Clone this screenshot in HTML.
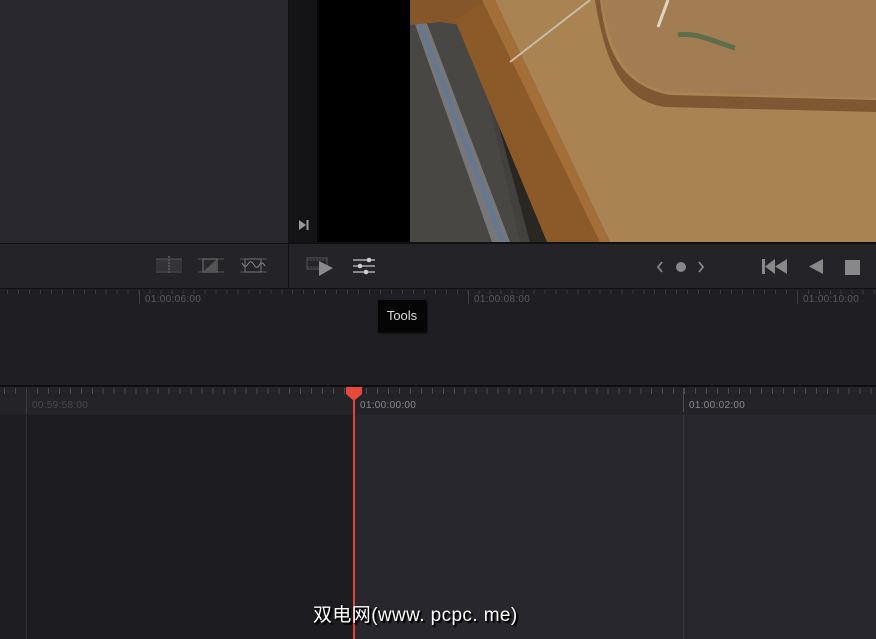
<!DOCTYPE html>
<html><head><meta charset="utf-8"><style>
*{margin:0;padding:0;box-sizing:border-box}
body{width:876px;height:639px;overflow:hidden;background:#1e1e22;position:relative;font-family:"Liberation Sans",sans-serif}
.a{position:absolute}
.tc{font-size:10px;color:#5a5a60;letter-spacing:0.3px}
</style></head><body>
<div class="a" style="left:0;top:0;width:288px;height:243px;background:#28282e"></div>
<div class="a" style="left:288px;top:0;width:1px;height:288px;background:#111"></div>
<div class="a" style="left:289px;top:0;width:28px;height:242px;background:#141416"></div>
<div class="a" style="left:317px;top:0;width:93px;height:242px;background:#000"></div>
<svg class="a" style="left:298px;top:219px" width="12" height="12"><path d="M1 1 L8 6 L1 11Z" fill="#999"/><rect x="8.5" y="1" width="2" height="10" fill="#999"/></svg>
<svg class="a" style="left:410px;top:0" width="466" height="242" viewBox="0 0 466 242">
<rect width="466" height="242" fill="#42413d"/>
<polygon points="0,0 0,242 110,242 60,20" fill="#484743"/>
<polygon points="0,10 10,5 100,242 82,242" fill="#77777a"/>
<polygon points="4,15 8,12 96,242 90,242" fill="#66788f"/>
<polygon points="60,20 80,10 170,242 120,242" fill="#2a2723"/>
<polygon points="0,0 80,0 80,22 50,25 30,22 0,25" fill="#85562a"/>
<polygon points="45,20 77,0 197,242 137,242" fill="#8c5a28"/>
<polygon points="72,0 85,0 200,242 190,242" fill="#a36e38"/>
<polygon points="85,0 466,0 466,242 200,242" fill="#a98452"/>
<path d="M190 0 C 195 40, 205 85, 260 95 L466 100 L466 112 L255 107 C 210 100, 195 60, 185 0Z" fill="#7d5832"/>
<path d="M192 0 L466 0 L466 98 L262 92 C 215 85, 200 50, 192 0Z" fill="#a27d53"/>
<path d="M100 62 L180 0" stroke="#c8bca8" stroke-width="2"/>
<path d="M248 27 L258 0" stroke="#e0d6c0" stroke-width="3"/>
<path d="M268 35 C 285 32, 300 40, 325 48" stroke="#5d6e4a" stroke-width="5" fill="none"/>
</svg>
<div class="a" style="left:289px;top:242px;width:587px;height:2px;background:#111"></div>
<div class="a" style="left:0;top:243px;width:288px;height:1px;background:#111"></div>
<div class="a" style="left:0;top:244px;width:288px;height:45px;background:#232328"></div>
<div class="a" style="left:289px;top:244px;width:587px;height:45px;background:#232328"></div>
<svg class="a" style="left:155px;top:256px" width="115" height="22">
<rect x="1" y="3" width="26" height="12" fill="#333338"/><line x1="14" y1="0" x2="14" y2="18" stroke="#777" stroke-dasharray="2,1"/><line x1="1" y1="3" x2="27" y2="3" stroke="#555"/><line x1="1" y1="16" x2="27" y2="16" stroke="#555"/>
<line x1="43" y1="3" x2="69" y2="3" stroke="#555"/><line x1="43" y1="16" x2="69" y2="16" stroke="#555"/><rect x="48" y="3" width="14" height="13" fill="#2a2a2e" stroke="#777"/><path d="M49 15 L61 4 L61 15Z" fill="#555"/>
<line x1="85" y1="3" x2="112" y2="3" stroke="#555"/><line x1="85" y1="16" x2="112" y2="16" stroke="#555"/><rect x="90" y="3" width="16" height="13" fill="none" stroke="#777"/><path d="M87 7 Q90 13 93 8 Q96 3 99 9 Q102 14 105 8 Q107 5 110 10" stroke="#888" fill="none"/>
</svg>
<svg class="a" style="left:305px;top:256px" width="30" height="22"><rect x="2" y="2" width="20" height="11" fill="none" stroke="#555"/><line x1="2" y1="4" x2="22" y2="4" stroke="#555" stroke-dasharray="2,1"/><line x1="2" y1="11" x2="22" y2="11" stroke="#555" stroke-dasharray="2,1"/><path d="M14 5 L28 12 L14 20Z" fill="#8a8a8e"/></svg>
<svg class="a" style="left:352px;top:257px" width="24" height="18"><g stroke="#aaa" stroke-width="1.5"><line x1="1" y1="3" x2="23" y2="3"/><line x1="1" y1="9" x2="23" y2="9"/><line x1="1" y1="15" x2="23" y2="15"/></g><circle cx="17" cy="3" r="2.3" fill="#ccc"/><circle cx="8" cy="9" r="2.3" fill="#ccc"/><circle cx="14" cy="15" r="2.3" fill="#ccc"/></svg>
<svg class="a" style="left:655px;top:259px" width="55" height="16"><path d="M7 3 L3 8 L7 13" stroke="#888" stroke-width="1.8" fill="none"/><circle cx="26" cy="8" r="5" fill="#888"/><path d="M44 3 L48 8 L44 13" stroke="#888" stroke-width="1.8" fill="none"/></svg>
<svg class="a" style="left:760px;top:258px" width="105" height="18"><rect x="2" y="1" width="3" height="15" fill="#888"/><path d="M5 8.5 L15 1 L15 16Z M15 8.5 L27 1 L27 16Z" fill="#888"/><path d="M49 8.5 L63 1 L63 16Z" fill="#888"/><rect x="85" y="2" width="15" height="15" fill="#888"/></svg>
<div class="a" style="left:0;top:288px;width:876px;height:1px;background:#111"></div>
<div class="a" style="left:0;top:289px;width:876px;height:97px;background:#1f1f23"></div>
<div class="a" style="left:7px;top:290px;width:869px;height:4px;background:repeating-linear-gradient(to right,#3c3c42 0 1px,transparent 1px 10.97px)"></div>
<div class="a" style="left:139px;top:290px;width:1px;height:14px;background:#3c3c42"></div>
<div class="a" style="left:468px;top:290px;width:1px;height:14px;background:#3c3c42"></div>
<div class="a" style="left:797px;top:290px;width:1px;height:14px;background:#3c3c42"></div>
<div class="a tc" style="left:145px;top:294px">01:00:06:00</div>
<div class="a tc" style="left:474px;top:294px">01:00:08:00</div>
<div class="a tc" style="left:803px;top:294px">01:00:10:00</div>
<div class="a" style="left:378px;top:300px;width:48px;height:32px;background:#050505;box-shadow:1px 1px 2px #000;color:#ddd;font-size:13px;line-height:32px;text-align:center">Tools</div>
<div class="a" style="left:0;top:385px;width:876px;height:2px;background:#0e0e10"></div>
<div class="a" style="left:0;top:387px;width:876px;height:28px;background:#232328"></div>
<div class="a" style="left:4px;top:388px;width:872px;height:6px;background:repeating-linear-gradient(to right,#4a4a50 0 1px,transparent 1px 10.97px)"></div>
<div class="a" style="left:26px;top:388px;width:1px;height:26px;background:#3c3c42"></div>
<div class="a" style="left:683px;top:388px;width:1px;height:24px;background:#4a4a50"></div>
<div class="a tc" style="left:32px;top:400px;color:#48484e">00:59:58:00</div>
<div class="a tc" style="left:360px;top:400px;color:#8a8a90">01:00:00:00</div>
<div class="a tc" style="left:689px;top:400px;color:#8a8a90">01:00:02:00</div>
<div class="a" style="left:0;top:415px;width:26px;height:224px;background:#1e1e22"></div>
<div class="a" style="left:26px;top:415px;width:1px;height:224px;background:#2c2c30"></div>
<div class="a" style="left:27px;top:415px;width:327px;height:224px;background:#1d1d21"></div>
<div class="a" style="left:354px;top:415px;width:522px;height:224px;background:#28272e"></div>
<div class="a" style="left:683px;top:415px;width:1px;height:224px;background:#3a3a40"></div>
<svg class="a" style="left:346px;top:387px" width="17" height="16"><path d="M0 0 H16 V7 L8 14 L0 7Z" fill="#e8473c"/></svg>
<div class="a" style="left:353px;top:398px;width:2px;height:241px;background:#e0443a"></div>
<div class="a" style="left:313px;top:600px;color:#fff;font-family:'Liberation Sans','Noto Sans CJK SC',sans-serif;font-size:19px;letter-spacing:0.4px;text-shadow:1px 1px 1px #000,2px 2px 1px #000">双电网(www. pcpc. me)</div>
</body></html>
